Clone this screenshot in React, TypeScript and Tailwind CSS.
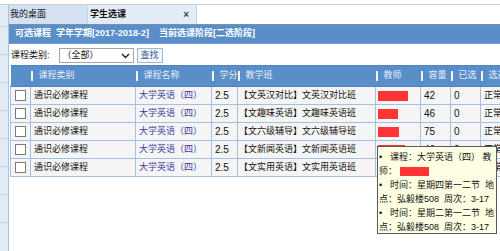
import React from "react";

const FONT = '"Liberation Sans", "Noto Sans CJK SC", sans-serif';

const rows = [
  { cls: "【文英汉对比】文英汉对比班", cap: "42", red: 30 },
  { cls: "【文趣味英语】文趣味英语班", cap: "46", red: 20 },
  { cls: "【文六级辅导】文六级辅导班", cap: "75", red: 21 },
  { cls: "【文新闻英语】文新闻英语班", cap: "46", red: 27 },
  { cls: "【文实用英语】文实用英语班", cap: "46", red: 26 },
];

function HeadCell({ label, w }: { label?: string; w: number }) {
  return (
    <th
      className="p-0 font-normal text-left align-middle border-y border-[#4f83bd]"
      style={{ width: w }}
    >
      {label ? (
        <div className="flex items-center h-[20px] overflow-hidden whitespace-nowrap">
          <span className="w-[2px] h-[10px] bg-[#eef4fb] shrink-0" />
          <span className="pl-[6px] text-[#e6eff9]">{label}</span>
        </div>
      ) : null}
    </th>
  );
}

export default function App() {
  return (
    <div
      className="relative w-[500px] h-[251px] overflow-hidden bg-white text-[9px] text-[#111]"
      style={{ fontFamily: FONT }}
    >
      <div className="h-[4px] bg-white" />
      <div className="flex h-[247px] border-t border-[#c9cdd4]">
        {/* left strip */}
        <div className="w-[9px] shrink-0 bg-[#e3ebf5] border-r border-[#a9c2e0] flex flex-col">
          <div className="h-[22px] border-b border-[#c3d3e7]" />
          <div className="h-[28px] border-b border-[#c3d3e7]" />
          <div className="h-[28px] border-b border-[#c3d3e7]" />
          <div className="h-[28px] border-b border-[#c3d3e7]" />
          <div className="h-[28px] border-b border-[#c3d3e7]" />
          <div className="h-[28px] border-b border-[#c3d3e7]" />
          <div className="h-[28px] border-b border-[#c3d3e7]" />
          <div className="h-[28px] border-b border-[#c3d3e7]" />
        </div>

        {/* main */}
        <div className="flex-1 flex flex-col min-w-0">
          {/* tab bar */}
          <div className="flex h-[19px] items-stretch bg-white">
            <div className="w-[79px] bg-[#d3e1f3] border-r border-[#c4d4ea] flex items-center pl-[1px]">
              <span>我的桌面</span>
            </div>
            <div className="w-[109px] bg-[#e4ecf8] border-r border-[#c4d4ea] flex items-center pl-[2px] pr-[7px] justify-between">
              <span className="font-bold">学生选课</span>
              <span className="text-[#444] font-bold text-[10px]">×</span>
            </div>
          </div>

          {/* blue bar */}
          <div className="h-[20px] bg-[#5a8ec8] border-t border-[#7b8fa8] border-b border-b-[#6e9dd2] flex items-center pl-[6px] text-white font-bold whitespace-pre">
            <span>可选课程  学年学期[2017-2018-2]    当前选课阶段[二选阶段]</span>
          </div>

          {/* filter row */}
          <div className="h-[15px] mt-[4px] flex items-center pl-[2px]">
            <span>课程类别:</span>
            <div className="ml-[9px] w-[75px] h-[15px] border border-[#a5a5a5] bg-white flex items-center justify-between pl-[3px] pr-[3px]">
              <span>（全部）</span>
              <svg width="9" height="6" viewBox="0 0 9 6">
                <path d="M1 1 L4.5 4.5 L8 1" stroke="#222" strokeWidth="1.4" fill="none" />
              </svg>
            </div>
            <div className="ml-[3px] w-[26px] h-[15px] border border-[#9fb6d6] bg-[#f4f7fb] flex items-center justify-center text-[#3a5b95]">
              查找
            </div>
          </div>

          {/* table */}
          <div className="mt-[2px] ml-[1px]">
            <table className="table-fixed border-collapse w-[530px]">
              <thead>
                <tr className="bg-[#5a8ec8] h-[21px]">
                  <HeadCell w={20} />
                  <HeadCell w={105} label="课程类别" />
                  <HeadCell w={76} label="课程名称" />
                  <HeadCell w={26} label="学分" />
                  <HeadCell w={138} label="教学班" />
                  <HeadCell w={45} label="教师" />
                  <HeadCell w={30} label="容量" />
                  <HeadCell w={30} label="已选" />
                  <HeadCell w={60} label="选选" />
                </tr>
              </thead>
              <tbody>
                {rows.map((r, i) => (
                  <tr key={i} className="h-[18px] bg-[#f5f5f5]">
                    <td className="p-0 border border-[#a3bfe2]">
                      <div className="flex items-center justify-center">
                        <span className="w-[11px] h-[11px] border border-[#7a7a7a] bg-white block" />
                      </div>
                    </td>
                    <td className="p-0 pl-[3px] border border-[#a3bfe2] whitespace-nowrap overflow-hidden">通识必修课程</td>
                    <td className="p-0 pl-[3px] border border-[#a3bfe2] whitespace-nowrap overflow-hidden text-[#3b3ba0]">大学英语（四）</td>
                    <td className="p-0 pl-[3px] border border-[#a3bfe2] text-[10px]">2.5</td>
                    <td className="p-0 pl-[1px] border border-[#a3bfe2] whitespace-nowrap overflow-hidden">{r.cls}</td>
                    <td className="p-0 pl-[2px] border border-[#a3bfe2]">
                      <span className="block h-[10px] bg-[#ff3535]" style={{ width: r.red }} />
                    </td>
                    <td className="p-0 pl-[3px] border border-[#a3bfe2] text-[10px]">{r.cap}</td>
                    <td className="p-0 pl-[3px] border border-[#a3bfe2] text-[10px]">0</td>
                    <td className="p-0 pl-[3px] border border-[#a3bfe2] whitespace-nowrap overflow-hidden">正常</td>
                  </tr>
                ))}
              </tbody>
            </table>
          </div>
        </div>
      </div>

      {/* tooltip */}
      <div className="absolute left-[377px] top-[146px] w-[120px] h-[88px] bg-[#ffffe3] border border-[#5a5a5a] pt-[3px] pl-[1px] leading-[14px] whitespace-pre text-[#111]">
        <div><span className="inline-block w-[11px]">•</span>课程：大学英语（四） 教</div>
        <div className="flex items-center">师：<span className="inline-block ml-[3px] w-[29px] h-[9px] bg-[#ff3535]" /></div>
        <div><span className="inline-block w-[11px]">•</span>时间：星期四第一二节  地</div>
        <div>点：弘毅楼508  周次：3-17</div>
        <div><span className="inline-block w-[11px]">•</span>时间：星期二第一二节  地</div>
        <div>点：弘毅楼508  周次：3-17</div>
      </div>
    </div>
  );
}
